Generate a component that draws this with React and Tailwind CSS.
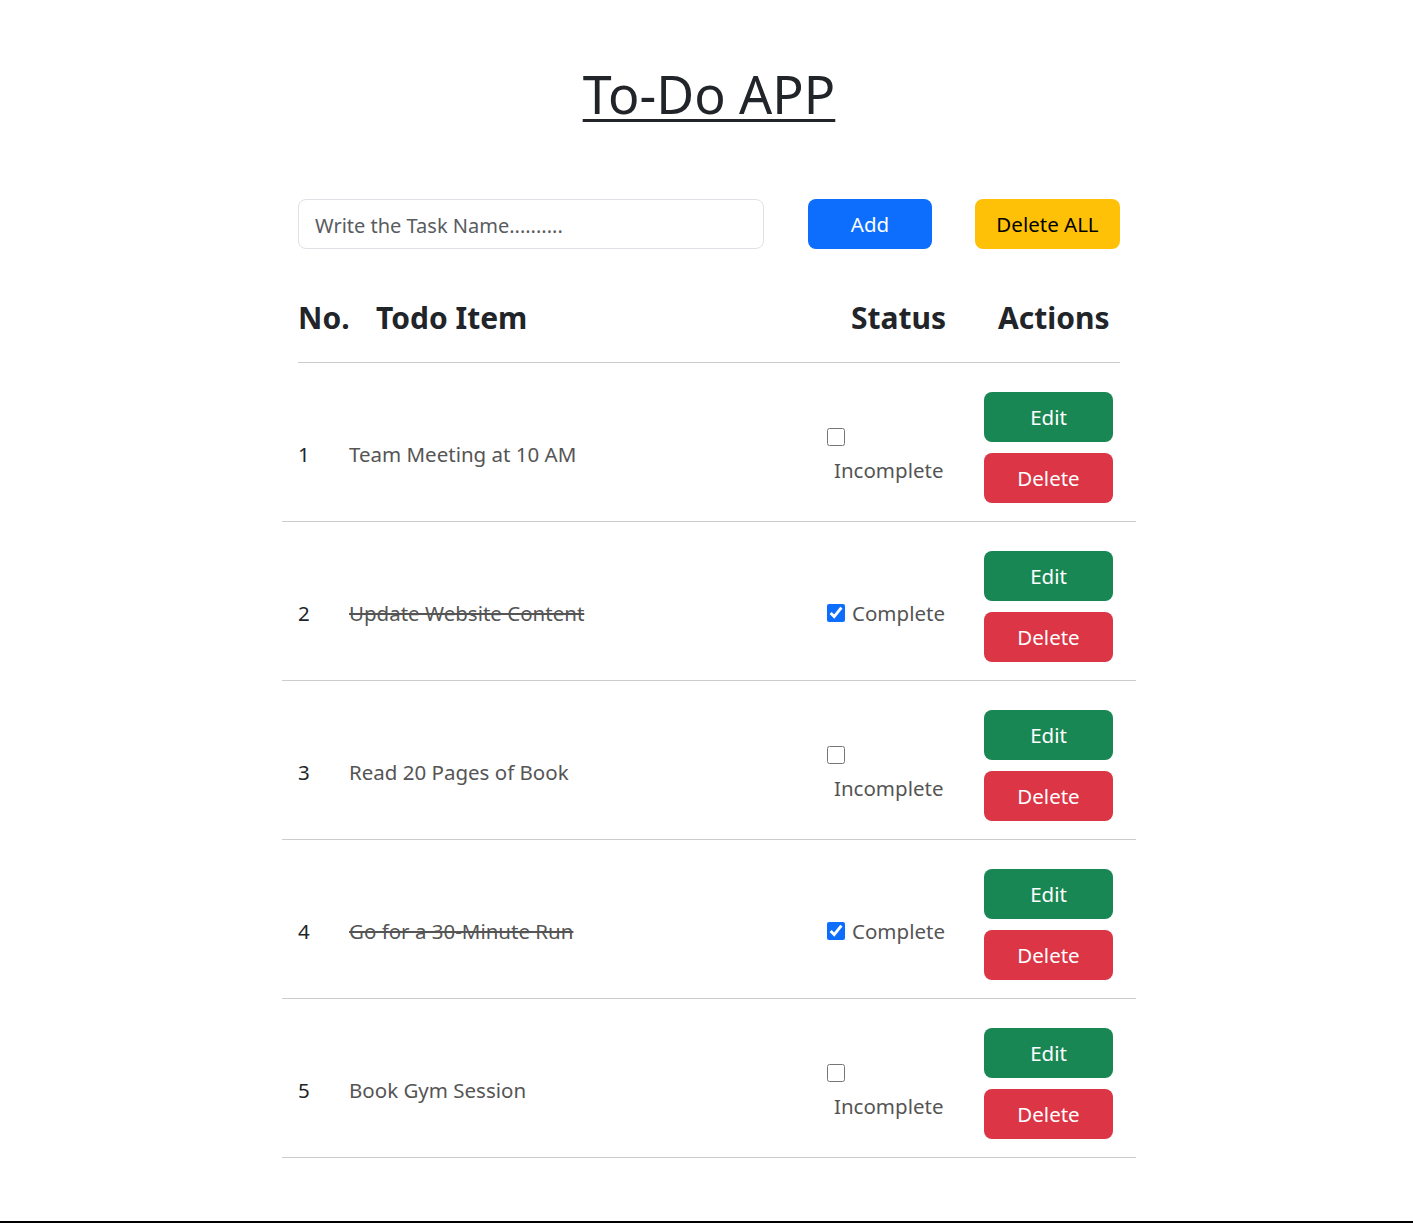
import React, { useState } from "react";

const initialTodos = [
    { id: 1, title: "Team Meeting at 10 AM", done: false },
    { id: 2, title: "Update Website Content", done: true },
    { id: 3, title: "Read 20 Pages of Book", done: false },
    { id: 4, title: "Go for a 30-Minute Run", done: true },
    { id: 5, title: "Book Gym Session", done: false },
];

const TodoRow = ({ index, todo, onToggle, onDelete }) => {
    return (
        <div className="flex items-center -mx-[16px] px-[16px] pt-[29px] pb-[18px] border-b border-[#cccccc]">
            <div className="w-[51px] pt-[12px] text-[20.5px] leading-[30px] text-[#212529]">{index}</div>
            <div className="w-[478px] pt-[12px] text-[20.5px] leading-[30px] text-[#555555]">
                <span className={todo.done ? "line-through" : ""}>{todo.title}</span>
            </div>
            <div className="w-[157px] pt-[12px] text-[20.5px] leading-[30px] text-[#555555]">
                {todo.done ? (
                    <label className="flex items-center gap-[7px]">
                        <input
                            type="checkbox"
                            checked
                            onChange={onToggle}
                            className="m-0 w-[18px] h-[18px] accent-[#0d6efd]"
                        />
                        Complete
                    </label>
                ) : (
                    <label className="flex flex-col items-start">
                        <input
                            type="checkbox"
                            checked={false}
                            onChange={onToggle}
                            className="m-0 mt-[5px] w-[18px] h-[18px] accent-[#0d6efd]"
                        />
                        <span className="mt-[9px] ml-[7px]">Incomplete</span>
                    </label>
                )}
            </div>
            <div className="w-[129px] flex flex-col gap-[11px]">
                <button className="h-[50px] pt-[1px] rounded-[8px] bg-[#198754] text-white text-[20.5px]">Edit</button>
                <button onClick={onDelete} className="h-[50px] pt-[1px] rounded-[8px] bg-[#dc3545] text-white text-[20.5px]">
                    Delete
                </button>
            </div>
        </div>
    );
};

export default function App() {
    const [todos, setTodos] = useState(initialTodos);
    const [task, setTask] = useState("");

    const addTodo = () => {
        if (!task.trim()) return;
        setTodos([...todos, { id: Date.now(), title: task, done: false }]);
        setTask("");
    };

    const toggle = (id) => {
        setTodos(todos.map((t) => (t.id === id ? { ...t, done: !t.done } : t)));
    };

    return (
        <div className="h-[1223px] flex flex-col bg-white font-['Noto_Sans',sans-serif] text-[#212529]">
            <div className="w-[827px] mx-auto pl-[5px]">
                <h1 className="pt-[60px] text-center text-[52px] leading-[67px] font-normal underline decoration-[3px] underline-offset-[5px]">
                    To-Do APP
                </h1>

                {/* input row */}
                <div className="flex mt-[72px]">
                    <input
                        value={task}
                        onChange={(e) => setTask(e.target.value)}
                        placeholder="Write the Task Name.........."
                        className="w-[466px] h-[50px] px-[16px] pt-[2px] border border-[#dee2e6] rounded-[8px] text-[20px] outline-none placeholder:text-[#595c5f]"
                    />
                    <button onClick={addTodo} className="ml-[44px] w-[124px] h-[50px] pt-[1px] rounded-[8px] bg-[#0d6efd] text-white text-[20.5px]">
                        Add
                    </button>
                    <button
                        onClick={() => setTodos([])}
                        className="ml-[43px] w-[145px] h-[50px] pt-[1px] rounded-[8px] bg-[#ffc107] text-black text-[20.5px]"
                    >
                        Delete ALL
                    </button>
                </div>

                {/* header */}
                <div className="flex mt-[50px] pb-[25px] border-b border-[#cccccc] text-[30px] leading-[38px] font-bold">
                    <div className="w-[78px]">No.</div>
                    <div className="w-[475px]">Todo Item</div>
                    <div className="w-[147px]">Status</div>
                    <div>Actions</div>
                </div>

                {todos.map((todo, i) => (
                    <TodoRow
                        key={todo.id}
                        index={i + 1}
                        todo={todo}
                        onToggle={() => toggle(todo.id)}
                        onDelete={() => setTodos(todos.filter((t) => t.id !== todo.id))}
                    />
                ))}
            </div>
            <div className="mt-auto h-[2px] bg-black"></div>
        </div>
    );
}
